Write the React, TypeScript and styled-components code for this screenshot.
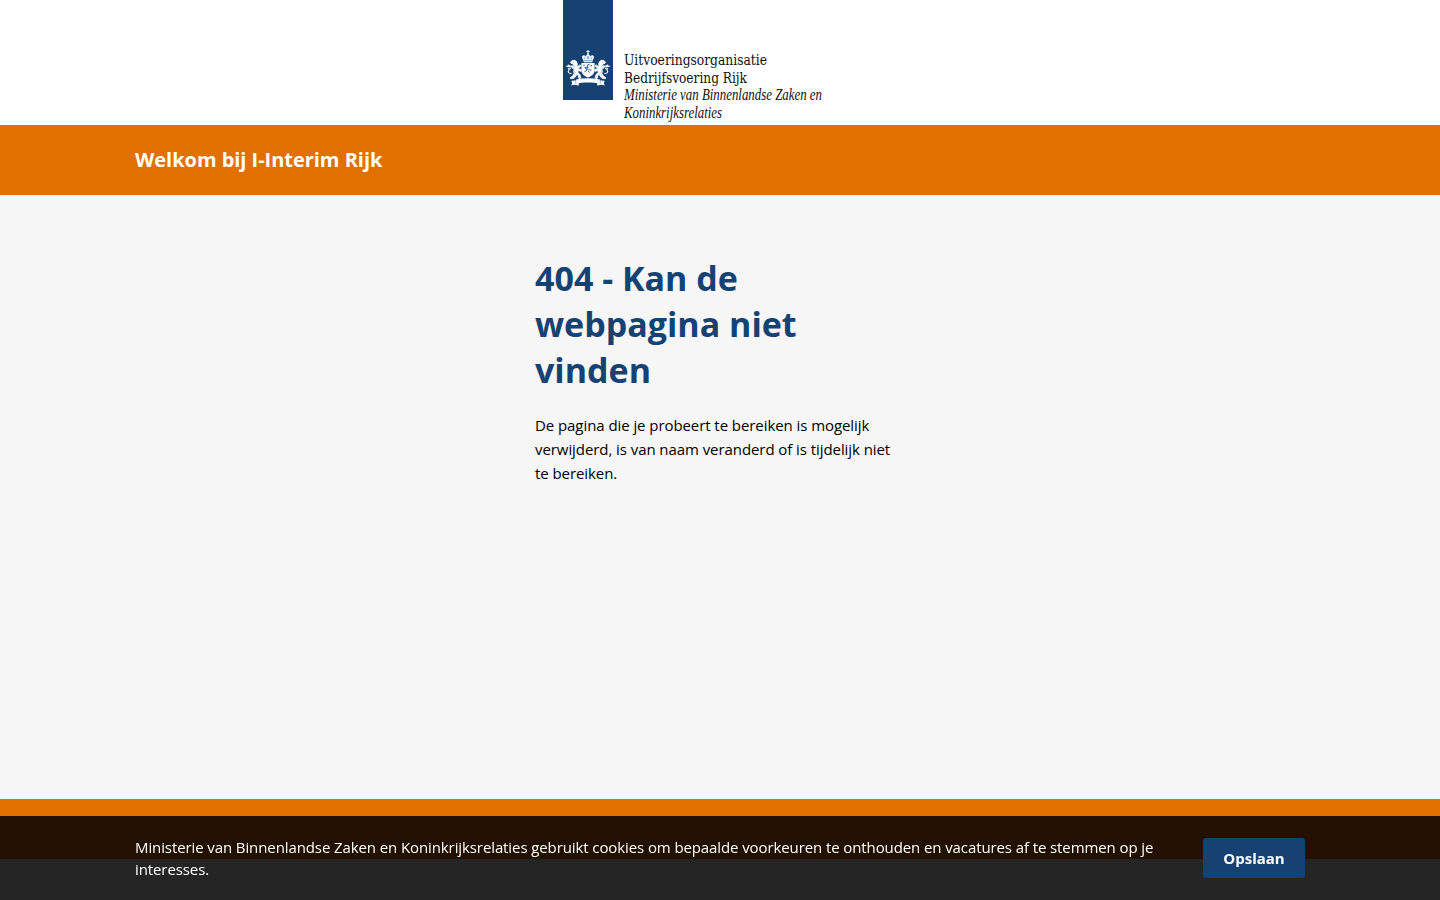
import React from "react";
import styled, { createGlobalStyle } from "styled-components";

const Global = createGlobalStyle`
  *, *::before, *::after { box-sizing: border-box; }
  html, body { margin: 0; padding: 0; }
  body { background: #f6f6f6; overflow: hidden; font-family: "Open Sans", sans-serif; font-size: 15px; color: #000; }
`;

const Page = styled.div`
  height: 900px;
  display: flex;
  flex-direction: column;
  overflow: hidden;
`;

const Header = styled.header`
  flex: none;
  height: 125px;
  background: #fff;
  padding-left: 563px;
`;

const Logo = styled.svg`
  display: block;
  width: 314px;
  height: 125px;
`;

const LogoText = styled.text<{ $ministry?: boolean }>`
  font-family: ${(p) => (p.$ministry ? '"Liberation Serif"' : '"DejaVu Serif Condensed", "DejaVu Serif"')}, serif;
  font-size: ${(p) => (p.$ministry ? "16px" : "14px")};
  font-style: ${(p) => (p.$ministry ? "italic" : "normal")};
  fill: #111;
`;

const TitleBar = styled.div`
  flex: none;
  height: 70px;
  background: #e17000;
  display: flex;
  align-items: center;
`;

const Container = styled.div`
  width: 1170px;
  margin: 0 auto;
`;

const SiteTitle = styled.p`
  margin: 0;
  color: #fff;
  font-size: 20px;
  line-height: 28px;
  font-weight: 700;
  letter-spacing: -0.03px;
`;

const Main = styled.main`
  flex: none;
  height: 604px;
  padding-top: 60px;
`;

const Message = styled.section`
  width: 370px;
  margin: 0 auto;
`;

const Heading = styled.h1`
  margin: 0 0 20px;
  color: #154273;
  font-size: 34px;
  line-height: 46px;
  font-weight: 700;
`;

const Paragraph = styled.p`
  margin: 0;
  line-height: 24px;
  letter-spacing: -0.07px;
`;

const Footer = styled.footer`
  flex: none;
  height: 60px;
  background: #e17000;
`;

const CookieBar = styled.aside`
  position: fixed;
  left: 0;
  right: 0;
  bottom: 0;
  height: 84px;
  background: rgba(0, 0, 0, 0.85);
  display: flex;
  align-items: center;
`;

const CookieRow = styled(Container)`
  display: flex;
  align-items: center;
  justify-content: space-between;
`;

const CookieText = styled.p`
  margin: 0;
  width: 1030px;
  color: #fff;
  line-height: 22px;
  letter-spacing: -0.1px;
`;

const SaveButton = styled.button`
  width: 102px;
  height: 40px;
  padding: 0;
  border: 0;
  border-radius: 3px;
  background: #154273;
  color: #fff;
  font: 700 15px/22px "Open Sans", sans-serif;
`;

const Lion = () => (
  <g>
    <path d="M13.7 61.8l-1.9-1.6-2.6.2-1.7 1.7.5 1.3 1.8.4.6 1.1-1.2 1.4.4 2.3 1.6 1.1-.7 1.6.6 2.3-1.8 2.7-2.1 1.2.4 1.3 3.4-.5 2.4-2.6-.2-1.8 2.2 1.8-.1 2.2 1.7 1 .9-1.4-.9-2.8-2-2.2.1-2.2 2.4 1.2 1.2-1-.9-1.2-2.1-.5-.5-1.1 2.2-.8.2-1.9-1.3.2-1.2 1-1.4-.3.8-1.4z" strokeWidth=".7" stroke="#fff" />
    <path d="M9 65.4l-2.2.2-1-1.1-1.2.5.3 1.4 2.2 1.1 2.4-.3z" />
    <path d="M8.6 73.4c-3.4.4-3.9-1.7-2.9-2.9.9-1 .3-1.9-.8-2M6.7 66.6L3.2 66.2M8 68.8l-2-.1" fill="none" stroke="#fff" strokeWidth="1.1" />
    <circle cx="10" cy="62.4" r=".35" fill="#154273" />
    <path d="M10.3 65.5l1.4 1M10.4 68.7l1.2.3M11.3 71.8l1.1.7" stroke="#154273" strokeWidth=".55" />
  </g>
);

const Crest = () => (
  <g fill="#fff">
    <g>
      <path d="M24.5 50h1v1.1h1.1v.8h-1.1v1.2h-1v-1.2h-1.1v-.8h1.1z" />
      <circle cx="25" cy="54" r="1" />
      <path d="M20.2 59.8c-1.8-2.1-1.5-4.4.7-4.5 1.3 0 1.8.8 1.8 1.9.1-1.7.9-2.6 2.3-2.6s2.2.9 2.3 2.6c0-1.1.5-1.9 1.8-1.9 2.2.1 2.5 2.4.7 4.5l-.5 2.5h-8.6z" />
      <path d="M21 57.2l.9 2M29 57.2l-.9 2M24.3 56.2v3M25.7 56.2v3M21 60.7h8" stroke="#154273" strokeWidth=".55" />
    </g>
    <path d="M18.4 63h13.2v7.4c0 3.4-2.9 5.4-6.6 7-3.7-1.6-6.6-3.6-6.6-7z" />
    <path d="M26.6 64.2l-1.8.6-.9 1.4 1.3.7-.5 1.1-2.8-.5.7 1.2 1.6.3-.6 1.6-2.1 1.2M25.1 68.6l1.5 1.5 1.8-.3M24.8 70.8l1.9 1.7M27.2 66l1.8-.4M21 66v-1.4" fill="none" stroke="#154273" strokeWidth=".9" />
    <Lion />
    <g transform="translate(50 0) scale(-1 1)"><Lion /></g>
    <path d="M13.1 79.4c7.5-1.5 16.3-1.5 23.8 0v4.2c-7-1.5-16.8-1.5-23.8 0z" />
    <path d="M12.8 80.2l-4.6.9 1.1 1.9-1.2 2.4c2.7-1.1 5.1-.9 7.4.4l.5-2.9-3.4.4zM37.2 80.2l4.6.9-1.1 1.9 1.2 2.4c-2.7-1.1-5.1-.9-7.4.4l-.5-2.9 3.4.4z" />
  </g>
);

export default function App() {
  return (
    <>
      <Global />
      <Page>
        <Header>
          <Logo viewBox="0 0 314 125" role="img" aria-label="Rijksoverheid">
            <rect width="50" height="100" fill="#154273" />
            <Crest />
            <LogoText x="61" y="65" textLength="143" lengthAdjust="spacingAndGlyphs">Uitvoeringsorganisatie</LogoText>
            <LogoText x="61" y="82.5" textLength="123" lengthAdjust="spacingAndGlyphs">Bedrijfsvoering Rijk</LogoText>
            <LogoText $ministry x="61" y="100" textLength="198" lengthAdjust="spacingAndGlyphs">Ministerie van Binnenlandse Zaken en</LogoText>
            <LogoText $ministry x="61" y="117.5" textLength="98" lengthAdjust="spacingAndGlyphs">Koninkrijksrelaties</LogoText>
          </Logo>
        </Header>
        <TitleBar>
          <Container>
            <SiteTitle>Welkom bij I-Interim Rijk</SiteTitle>
          </Container>
        </TitleBar>
        <Main>
          <Message>
            <Heading>404 - Kan de webpagina niet vinden</Heading>
            <Paragraph>
              De pagina die je probeert te bereiken is mogelijk verwijderd, is van naam veranderd of is tijdelijk niet te bereiken.
            </Paragraph>
          </Message>
        </Main>
        <Footer />
      </Page>
      <CookieBar>
        <CookieRow>
          <CookieText>
            Ministerie van Binnenlandse Zaken en Koninkrijksrelaties gebruikt cookies om bepaalde voorkeuren te onthouden en vacatures af te stemmen op je interesses.
          </CookieText>
          <SaveButton type="button">Opslaan</SaveButton>
        </CookieRow>
      </CookieBar>
    </>
  );
}
